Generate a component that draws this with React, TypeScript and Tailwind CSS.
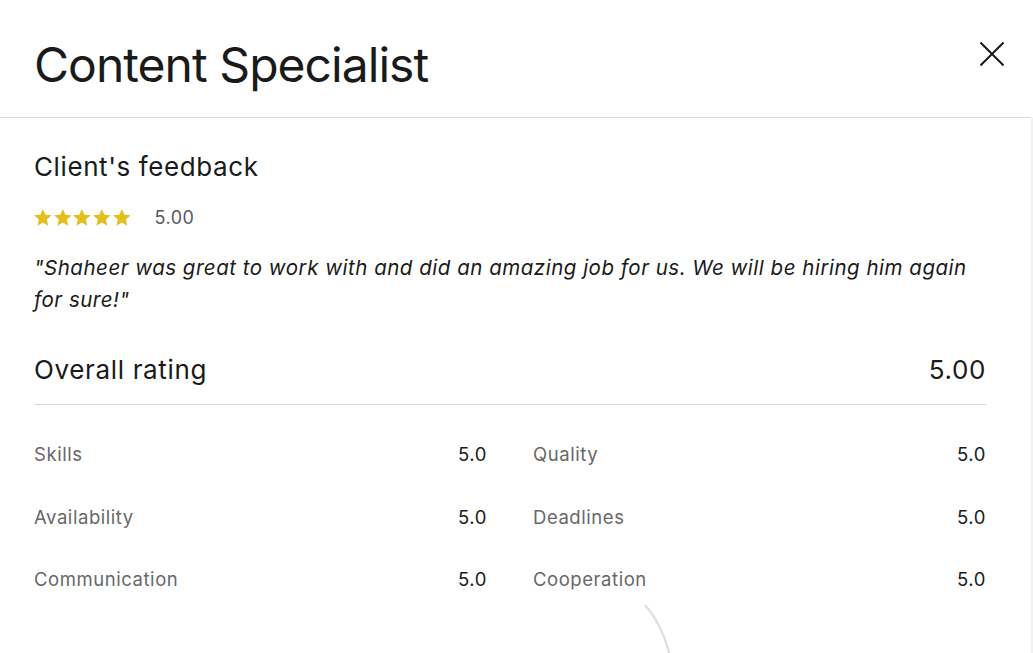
import React from "react";

const Star = () => (
  <svg width="17.7" height="17" viewBox="1 0.5 22 21" className="fill-[#e4be1c]">
    <path d="M12 0.5l3.1 7.1 7.9.7-6 5.3 1.8 7.8L12 17.3l-6.8 4.1 1.8-7.8-6-5.3 7.9-.7z" />
  </svg>
);

const rows: [string, string, string, string][] = [
  ["Skills", "5.0", "Quality", "5.0"],
  ["Availability", "5.0", "Deadlines", "5.0"],
  ["Communication", "5.0", "Cooperation", "5.0"],
];

export default function App() {
  return (
    <div className="w-[1033px] h-[653px] overflow-hidden bg-white text-[#1a1a1a] flex flex-col font-['Inter',sans-serif]">
      <header className="h-[118px] shrink-0 flex items-start justify-between pl-[34px] pr-[27px] border-b border-[#d9d9d9] mr-[2px]">
        <h1 className="mt-[37px] text-[48px] leading-[56px] tracking-[-0.02em] font-normal">Content Specialist</h1>
        <svg width="24" height="24" viewBox="0 0 24 24" className="mt-[42px] stroke-[#1a1a1a]" strokeWidth="2" fill="none">
          <path d="M0.5 0.5l23 23M23.5 0.5l-23 23" />
        </svg>
      </header>
      <div className="flex-1 flex min-h-0">
        <div className="relative flex-1 pl-[34px] pr-[45px] pt-[33px]">
          <h2 className="text-[26px] leading-[32px] tracking-[0.023em] font-normal">Client's feedback</h2>
          <div className="mt-[24px] flex items-center h-[20px]">
            <div className="flex gap-[2px]">
              <Star />
              <Star />
              <Star />
              <Star />
              <Star />
            </div>
            <span className="ml-[24px] text-[18px] tracking-[0.03em] text-[#595959]">5.00</span>
          </div>
          <p className="mt-[25px] text-[20.5px] leading-[32px] tracking-[0.025em] italic">
            "Shaheer was great to work with and did an amazing job for us. We will be hiring him again for sure!"
          </p>
          <div className="mt-[38px] pb-[18px] border-b border-[#d9d9d9] flex justify-between text-[26px] leading-[32px] tracking-[0.025em]">
            <span>Overall rating</span>
            <span>5.00</span>
          </div>
          <div className="mt-[37px] grid grid-cols-2 gap-x-[46px] gap-y-[38.5px] text-[18.5px] leading-[24px] tracking-[0.03em]">
            {rows.map(([a, av, b, bv]) => (
              <React.Fragment key={a}>
                <div className="flex justify-between">
                  <span className="text-[#676767]">{a}</span>
                  <span>{av}</span>
                </div>
                <div className="flex justify-between">
                  <span className="text-[#676767]">{b}</span>
                  <span>{bv}</span>
                </div>
              </React.Fragment>
            ))}
          </div>
          <svg className="absolute left-[600px] top-[482px]" width="90" height="60" viewBox="0 0 90 60" fill="none">
            <path d="M45 5 Q62 24 70 56" stroke="#dedede" strokeWidth="2" />
          </svg>
        </div>
        <div className="w-[2px] bg-[#f0f0f0]" />
      </div>
    </div>
  );
}
